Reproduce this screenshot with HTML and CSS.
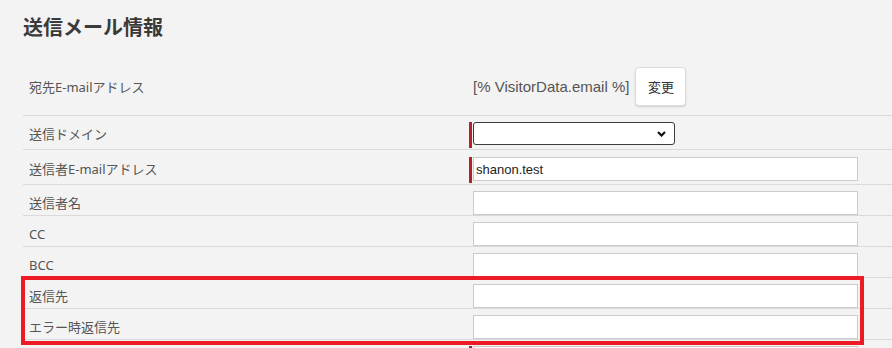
FILE: index.html
```html
<!DOCTYPE html>
<html lang="ja">
<head>
  <meta charset="UTF-8">
  <title>送信メール情報</title>
  <link rel="stylesheet" href="styles.css">
</head>
<body>
  <div class="page">
    <h2 class="title">送信メール情報</h2>

    <div class="form">
      <div class="row row-head">
        <div class="label">宛先E-mailアドレス</div>
        <div class="value value-text">
          <span>[% VisitorData.email %]</span>
          <button class="btn" type="button">変更</button>
        </div>
      </div>

      <div class="row row-select">
        <div class="label">送信ドメイン</div>
        <div class="value">
          <div class="field req">
            <div class="select">
              <svg width="9" height="6" viewBox="0 0 9 6"><path d="M1 1 L4.5 4.5 L8 1" fill="none" stroke="#111" stroke-width="2.2"/></svg>
            </div>
          </div>
        </div>
      </div>

      <div class="row row-req">
        <div class="label">送信者E-mailアドレス</div>
        <div class="value">
          <div class="field req"><input type="text" value="shanon.test"></div>
        </div>
      </div>

      <div class="row">
        <div class="label">送信者名</div>
        <div class="value"><div class="field"><input type="text"></div></div>
      </div>

      <div class="row">
        <div class="label">CC</div>
        <div class="value"><div class="field"><input type="text"></div></div>
      </div>

      <div class="row">
        <div class="label">BCC</div>
        <div class="value"><div class="field"><input type="text"></div></div>
      </div>

      <div class="row">
        <div class="label">返信先</div>
        <div class="value"><div class="field"><input type="text"></div></div>
      </div>

      <div class="row">
        <div class="label">エラー時返信先</div>
        <div class="value"><div class="field"><input type="text"></div></div>
      </div>

      <div class="row">
        <div class="label"></div>
        <div class="value"><div class="field req"><input type="text"></div></div>
      </div>
    </div>

    <div class="highlight"></div>
  </div>
</body>
</html>
```

FILE: styles.css
```css
body {
  margin: 0;
  background: #f3f3f3;
  font-family: "Noto Sans", "Noto Sans CJK JP", sans-serif;
  color: #555;
}
.page {
  position: relative;
  padding: 13px 0 0 23px;
}
.title {
  margin: 0 0 17px;
  font-family: "Noto Sans CJK JP", sans-serif;
  font-size: 20px;
  line-height: 28px;
  font-weight: bold;
  color: #3a3a3a;
}
.row {
  display: grid;
  grid-template-columns: 446px 1fr;
  padding-top: 6px;
  border-bottom: 1px solid #dadada;
}
.label {
  padding-left: 6px;
  font-size: 13px;
  line-height: 24px;
  color: #555;
}
.row-head {
  align-items: center;
  padding: 9px 0 9px;
}
.row-select {
  padding-bottom: 1px;
}
.row-req {
  padding: 7px 0 1px;
}
.value-text {
  display: flex;
  align-items: center;
  padding-left: 4px;
  font-family: "Liberation Sans", Arial, sans-serif;
  font-size: 15px;
  color: #555;
}
.btn {
  width: 51px;
  height: 39px;
  margin-left: 6px;
  background: #fff;
  border: 1px solid #dcdcdc;
  border-radius: 4px;
  box-shadow: 0 1px 2px rgba(0, 0, 0, 0.15);
  font-family: "Noto Sans CJK JP", sans-serif;
  font-size: 13px;
  color: #333;
  padding: 0;
}
.field {
  display: flex;
  align-items: flex-start;
  border-left: 3px solid transparent;
  padding-left: 1px;
}
.field.req {
  border-left-color: #b3212b;
  height: 26px;
}
.field input {
  box-sizing: border-box;
  width: 385px;
  height: 24px;
  margin: 0;
  padding: 0 2px;
  border: 1px solid #cbcbcb;
  background: #fff;
  font-family: "Liberation Sans", Arial, sans-serif;
  font-size: 13px;
  color: #222;
  outline: none;
}
.select {
  box-sizing: border-box;
  width: 202px;
  height: 23px;
  display: flex;
  align-items: center;
  justify-content: flex-end;
  padding-right: 8px;
  background: #fff;
  border: 1px solid #3c3c3c;
  border-radius: 3px;
}
.highlight {
  position: absolute;
  left: 21px;
  top: 276px;
  width: 843px;
  height: 69px;
  box-sizing: border-box;
  border: 4px solid #ed1c24;
}
```
